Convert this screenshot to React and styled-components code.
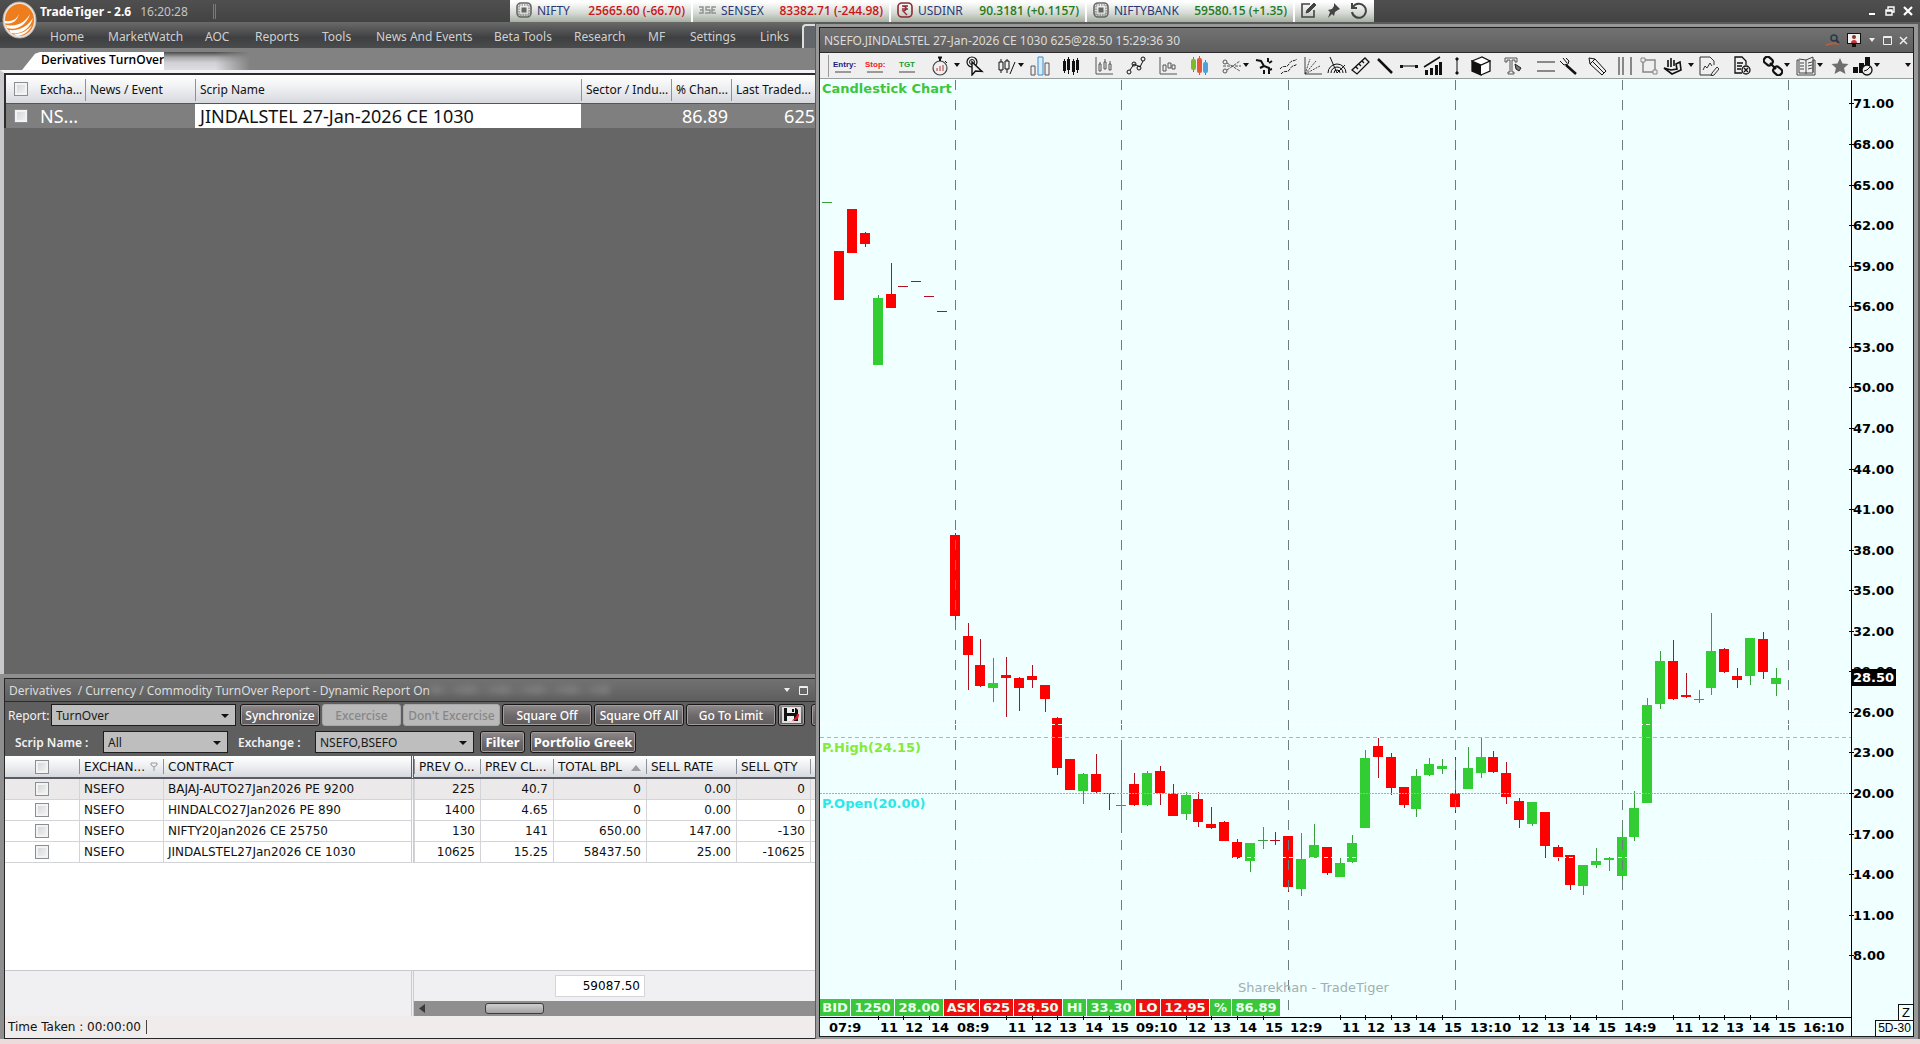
import React from 'react';
import styled, { createGlobalStyle, css } from 'styled-components';

const GlobalStyle = createGlobalStyle`
  * {
    box-sizing: border-box;
  }

  body {
    margin: 0;
    background: #ecdcdc;
    font-family: 'Noto Sans', 'Open Sans', sans-serif;
    font-size: 12px;
    color: #111;
  }

  button, input, select {
    font-family: inherit;
  }
`;

const Page = styled.div`
  display: flex;
  flex-direction: column;
  height: 100vh;
  min-height: 700px;
  padding-bottom: 5px;
  overflow: hidden;
`;

/* ---------- title bar ---------- */

const TitleBar = styled.header`
  position: relative;
  display: flex;
  flex: none;
  height: 22px;
  background: linear-gradient(#4f4f4f, #434343);
`;

const Logo = styled.svg`
  position: absolute;
  left: 2px;
  top: 1px;
  z-index: 2;
`;

const Brand = styled.div`
  display: flex;
  flex: 1 1 510px;
  align-items: center;
  gap: 9px;
  padding-left: 40px;
  color: #c4c4c4;
  white-space: nowrap;

  strong {
    color: #fff;
  }
`;

const BrandRule = styled.span`
  width: 3px;
  height: 15px;
  margin-left: 16px;
  border: solid #7b7b7b;
  border-width: 0 1px;
`;

const Ticker = styled.div`
  display: flex;
  flex: none;
`;

const TickerCell = styled.div`
  display: flex;
  align-items: center;
  gap: 5px;
  width: ${(p) => p.$width}px;
  padding: 0 6px 2px;
  border-right: 2px solid #fff;
  background: linear-gradient(#fdfefd 10%, #d5dad4 60%, #a5b0a1);
  color: #2b3876;
  white-space: nowrap;
`;

const TickerValue = styled.span`
  margin-left: auto;
  font-family: 'Open Sans', sans-serif;
  font-weight: 600;
  color: ${(p) => (p.$up ? '#267a1f' : '#c9161b')};
`;

const IconButton = styled.button`
  display: flex;
  padding: 0;
  border: 0;
  background: none;
  color: inherit;
`;

const TickerTools = styled(TickerCell)`
  gap: 8px;
  padding-left: 5px;
  border-right: 0;
  color: #444;
`;

const WindowControls = styled.div`
  display: flex;
  flex: 1 1 546px;
  align-items: center;
  justify-content: flex-end;
  gap: 8px;
  padding-right: 7px;
  color: #fff;
`;

/* ---------- workspace ---------- */

const Workspace = styled.main`
  display: grid;
  flex: 1;
  grid-template-columns: 815fr 1105fr;
  min-height: 0;
`;

const LeftSide = styled.div`
  display: flex;
  flex-direction: column;
  min-width: 0;
  overflow: hidden;
  background: #828282;
`;

const Menu = styled.nav`
  display: flex;
  flex: none;
  height: 26px;
  padding-left: 50px;
  background: linear-gradient(#6a6a6a, #3f4042 60%, #4a4b4d);
`;

const MenuLink = styled.a`
  flex: none;
  width: ${(p) => p.$width}px;
  line-height: 30px;
  color: #d0d0d0;
  text-decoration: none;
  white-space: nowrap;
`;

const MenuStub = styled.span`
  flex: 1;
  margin-top: 2px;
  border: solid #ddd;
  border-width: 2px 0 0 2px;
  border-radius: 4px 0 0 0;
  background: #63676b;
`;

const TabStrip = styled.div`
  display: flex;
  flex: none;
  height: 22px;
  padding: 4px 0 0 22px;
`;

const Tab = styled.button`
  flex: none;
  min-width: 135px;
  padding: 0 0 2px 19px;
  border: 0;
  background: #fff;
  clip-path: polygon(0 100%, 13px 10%, 18px 0, 100% 0, 100% 100%);
  font-family: 'Open Sans', sans-serif;
  font-size: 12px;
  font-weight: 600;
  line-height: 16px;
  color: #000;
  text-align: left;
  white-space: nowrap;
`;

const TabSmear = styled.span`
  width: 86px;
  background: linear-gradient(90deg, transparent 60%, #828282), linear-gradient(#4a4a4a, #a9a9ac 30%, #d2d2d6 60%, #dedee2);
`;

const WatchFrame = styled.section`
  flex: 1;
  min-height: 0;
  border-top: 3px solid #f4f4f6;
  border-left: 4px solid #c9c9cb;
  background: #666;
  overflow: hidden;
`;

const WatchTable = styled.table`
  width: 100%;
  border-top: 2px solid #2b2b30;
  border-left: 2px solid #2b2b30;
  border-collapse: separate;
  border-spacing: 0;
  table-layout: fixed;
  white-space: nowrap;

  th {
    height: 29px;
    padding: 0 0 0 5px;
    border-bottom: 1px solid #55555c;
    background: linear-gradient(90deg, #8c929a, #8c929a) 0 60% / 1px 22px no-repeat,
      linear-gradient(#fff, #f1f2f4 40%, #d6d9de);
    font-weight: 400;
    text-align: left;
    overflow: hidden;
  }

  th:first-child,
  th:nth-child(2) {
    background: linear-gradient(#fff, #f1f2f4 40%, #d6d9de);
  }

  td {
    height: 24px;
    padding: 0 0 0 5px;
    background: #7f7f7f;
    color: #fff;
    font-size: 18px;
    line-height: 22px;
  }

  th:first-child,
  td:first-child {
    padding: 0 0 0 8px;
  }
`;

const ScripCell = styled.td`
  && {
    background: #fff;
    color: #111;
  }
`;

const NumberCell = styled.td`
  && {
    padding: 0 ${(p) => p.$pad}px 0 0;
    text-align: right;
  }
`;

const Check = styled.input.attrs({ type: 'checkbox' })`
  display: block;
  appearance: none;
  width: 14px;
  height: 14px;
  margin: 0 ${(p) => (p.$center ? 'auto' : '0')};
  border: 1px solid #8b8f94;
  background: linear-gradient(135deg, #cfd2d6, #f7f7f7);
  box-shadow: inset 0 0 0 2px #f3f3f3;
`;

/* ---------- report window ---------- */

const ReportWindow = styled.section`
  flex: none;
  padding: 4px 0 0 4px;
  background: #8f8f8f;
`;

const ReportBody = styled.div`
  border: solid #262629;
  border-width: 1px 0 1px 1px;
  background: #5f5f5f;
`;

const PanelTitle = styled.div`
  display: flex;
  align-items: center;
  height: ${(p) => p.$height}px;
  padding: 0 ${(p) => p.$right}px 0 4px;
  border-bottom: 1px solid #2c2c2e;
  background: linear-gradient(#727272, #5e5e5e);
  color: #dcdcdc;
  white-space: nowrap;
`;

const TitleSmear = styled.span`
  width: 180px;
  height: 8px;
  background: repeating-linear-gradient(90deg, #8d8d8d 0 9px, #737373 15px 22px, #858585 28px 34px);
  opacity: 0.6;
  filter: blur(3px);
`;

const PanelControls = styled.div`
  display: flex;
  align-items: center;
  gap: ${(p) => p.$gap}px;
  margin-left: auto;
`;

const Toolbar = styled.div`
  display: flex;
  align-items: center;
  gap: 2px;
  height: ${(p) => p.$height}px;
  padding-left: ${(p) => p.$left}px;
  padding-bottom: 1px;
  overflow: hidden;
`;

const FieldLabel = styled.label`
  flex: none;
  width: ${(p) => p.$width}px;
  color: #f2f2f2;
  font-weight: ${(p) => (p.$strong ? 600 : 400)};
  white-space: nowrap;
`;

const SelectBox = styled.span`
  position: relative;
  flex: none;
  width: ${(p) => p.$width}px;
  margin-right: ${(p) => p.$after}px;

  &::after {
    content: '';
    position: absolute;
    right: 7px;
    top: 10px;
    border: solid transparent;
    border-width: 4px 4px 0;
    border-top-color: #111;
  }
`;

const Select = styled.select`
  appearance: none;
  display: block;
  width: 100%;
  height: 22px;
  padding: 0 4px;
  border: 1px solid #1d1d1d;
  border-radius: 0;
  background: #bebebe;
  color: #1a1a1a;
  font-size: 12px;
`;

const Action = styled.button`
  display: flex;
  flex: none;
  align-items: center;
  justify-content: center;
  width: ${(p) => p.$width}px;
  height: 22px;
  margin-right: ${(p) => p.$after || 0}px;
  padding: 0;
  border: 1px solid #161616;
  border-radius: 3px;
  background: linear-gradient(#8f898a, #6f6b6c 50%, #5f5b5c);
  box-shadow: inset 0 0 0 1px #a39d9e;
  color: #fff;
  font-size: ${(p) => (p.$bold ? 13 : 12)}px;
  font-weight: ${(p) => (p.$bold ? 700 : 500)};
  white-space: nowrap;

  ${(p) =>
    p.disabled &&
    css`
      border-color: #a8a8a8;
      background: #b9b9b9;
      box-shadow: none;
      color: #878787;
    `}
`;

const Sheet = styled.div`
  min-height: 214px;
  background: #fff;
  overflow: hidden;
`;

const ReportTable = styled.table`
  width: 100%;
  border-collapse: separate;
  border-spacing: 0;
  table-layout: fixed;
  font-family: 'DejaVu Sans', Verdana, sans-serif;
  white-space: nowrap;

  th {
    height: 23px;
    padding: 0 5px;
    border-bottom: 2px solid #5c5c66;
    background: linear-gradient(90deg, #8c929a, #8c929a) 0 3px / 1px 15px no-repeat,
      linear-gradient(#fff, #f1f2f4 40%, #d6d9de);
    font-size: 12px;
    font-weight: 400;
    text-align: left;
    overflow: hidden;
  }

  td {
    height: 21px;
    padding: 0 5px;
    border: solid #d2d4d8;
    border-width: 0 0 1px 1px;
    font-size: 12px;
    line-height: 18px;
  }

  th:first-child {
    background: linear-gradient(#fff, #f1f2f4 40%, #d6d9de);
  }

  td:first-child {
    border-left: 0;
  }

  th:nth-child(3) {
    border-right: 3px double #5c5c66;
  }

  td:nth-child(3) {
    border-right: 3px double #c9ccd2;
  }

  td:nth-child(2),
  td:nth-child(3) {
    padding-left: 4px;
  }

  tbody tr:first-child {
    background: #ece9ea;
  }

  td:nth-child(n + 4) {
    text-align: right;
  }
`;

const HeadIcon = styled.svg`
  float: right;
  margin: ${(p) => p.$top}px 0 0;
`;

const Totals = styled.div`
  display: flex;
  height: 31px;
  border-top: 1px solid #c6c9ce;
  background: #f0f0f2;
`;

const TotalsPane = styled.div`
  flex: none;
  width: ${(p) => p.$width}px;
  border-right: ${(p) => (p.$split ? '3px double #c9ccd2' : '0')};
`;

const TotalInput = styled.input`
  width: 90px;
  height: 22px;
  margin: 4px 0 0 2px;
  padding: 0 4px;
  border: 1px solid #d4d6da;
  background: #fff;
  font-family: 'DejaVu Sans', Verdana, sans-serif;
  font-size: 12px;
  text-align: right;
`;

const ScrollRow = styled.div`
  display: flex;
  height: 15px;
  background: #f0f0f2;
`;

const ScrollTrack = styled.div`
  display: flex;
  flex: 1;
  align-items: center;
  gap: 60px;
  padding-left: 5px;
  background: #8f8f8f;
`;

const ScrollThumb = styled.span`
  width: 59px;
  height: 11px;
  border: 1px solid #3d3d3d;
  border-radius: 3px;
  background: linear-gradient(#cfcfcf, #a2a2a2);
`;

const StatusBar = styled.div`
  display: flex;
  align-items: center;
  height: 22px;
  padding-left: 3px;
  background: #efeceb;
  font-family: 'DejaVu Sans', Verdana, sans-serif;

  span {
    padding-right: 5px;
    border-right: 1px solid #444;
  }
`;

/* ---------- chart window ---------- */

const ChartFrame = styled.section`
  display: flex;
  flex-direction: column;
  min-width: 0;
  min-height: 0;
  border: solid #5a5a5a;
  border-width: 2px 2px 0 1px;
`;

const ChartBezel = styled.div`
  display: flex;
  flex: 1;
  min-height: 0;
  padding: 3px 4px 2px 3px;
  background: #989898;
`;

const ChartWindow = styled.div`
  display: flex;
  flex: 1;
  flex-direction: column;
  min-width: 0;
  border: 1px solid #1f1f1f;
  background: #f0ffff;
`;

const ChartTools = styled.div`
  display: flex;
  flex: none;
  align-items: center;
  height: 26px;
  padding: 0 1px 0 6px;
  border-bottom: 1px solid #9aa0a0;
  background: #efefef;
  overflow: hidden;

  &::before {
    content: '';
    width: 2px;
    height: 22px;
    border-right: 1px solid #999;
  }
`;

const ToolButton = styled(IconButton)`
  flex: none;
  margin-left: ${(p) => (p.$last ? 'auto' : `${p.$before}px`)};
  color: #111;
`;

const Word = styled.span`
  width: 20px;
  padding-bottom: 2px;
  background: linear-gradient(#999, #999) center bottom / 16px 2px no-repeat;
  color: ${(p) => p.$color};
  font-family: 'Liberation Sans', sans-serif;
  font-size: 8px;
  font-weight: 700;
  line-height: 12px;
  text-align: center;
`;

const ChartArea = styled.div`
  position: relative;
  flex: 1;
  min-height: 0;
`;

const Plot = styled.svg`
  display: block;
  width: 100%;
  height: 100%;
  font-family: 'DejaVu Sans', Verdana, sans-serif;
  font-size: 13px;
`;

const QuoteStrip = styled.div`
  position: absolute;
  left: 0;
  bottom: 20px;
  display: flex;
  gap: 1px;
`;

const Quote = styled.span`
  width: ${(p) => p.$width}px;
  height: 17px;
  background: ${(p) => (p.$down ? '#ee1010' : '#3cc63c')};
  color: #eafff0;
  font-family: 'DejaVu Sans', Verdana, sans-serif;
  font-size: 13px;
  font-weight: 700;
  line-height: 17px;
  text-align: center;
`;

const CornerBox = styled.button`
  position: absolute;
  right: -1px;
  bottom: ${(p) => p.$bottom}px;
  width: ${(p) => p.$width}px;
  height: 17px;
  padding: 0;
  border: 1px solid #111;
  background: #f0ffff;
  font-family: 'Liberation Sans', sans-serif;
  font-size: ${(p) => p.$size}px;
  line-height: 15px;
  text-align: center;
`;

/* ---------- data ---------- */

const menu = [
  ['Home', 58],
  ['MarketWatch', 97],
  ['AOC', 50],
  ['Reports', 67],
  ['Tools', 54],
  ['News And Events', 118],
  ['Beta Tools', 80],
  ['Research', 74],
  ['MF', 42],
  ['Settings', 70],
  ['Links', 42],
];

const tickers = [
  { name: 'NIFTY', value: '25665.60 (-66.70)', icon: 'chip', width: 183 },
  { name: 'SENSEX', value: '83382.71 (-244.98)', icon: 'bse', width: 198 },
  { name: 'USDINR', value: '90.3181 (+0.1157)', icon: 'rupee', up: true, width: 196 },
  { name: 'NIFTYBANK', value: '59580.15 (+1.35)', icon: 'chip', up: true, width: 208 },
];

const contracts = [
  ['BAJAJ-AUTO27Jan2026 PE 9200', '225', '40.7', '0', '0.00', '0'],
  ['HINDALCO27Jan2026 PE 890', '1400', '4.65', '0', '0.00', '0'],
  ['NIFTY20Jan2026 CE 25750', '130', '141', '650.00', '147.00', '-130'],
  ['JINDALSTEL27Jan2026 CE 1030', '10625', '15.25', '58437.50', '25.00', '-10625'],
];

const quotes = [
  ['BID', 30],
  ['1250', 43],
  ['28.00', 48],
  ['ASK', 35, true],
  ['625', 33, true],
  ['28.50', 48, true],
  ['HI', 23],
  ['33.30', 48],
  ['LO', 24, true],
  ['12.95', 48, true],
  ['%', 21],
  ['86.89', 48],
];

// direction, high, body top, body bottom, low
const candles = [
  ['g', 123, 123, 124, 124], ['r', 172, 172, 221, 221], ['r', 130, 130, 174, 174],
  ['r', 153, 154, 165, 168], ['g', 216, 219, 286, 286], ['r', 184, 215, 229, 229],
  ['r', 207, 207, 208, 208], ['r', 202, 202, 203, 203], ['r', 217, 217, 218, 218],
  ['r', 232, 232, 233, 233], ['r', 454, 456, 537, 547], ['r', 544, 557, 576, 611],
  ['r', 560, 586, 607, 608], ['g', 579, 604, 609, 623], ['r', 578, 596, 599, 638],
  ['r', 598, 599, 609, 632], ['r', 586, 597, 601, 609], ['r', 606, 606, 620, 633],
  ['r', 638, 639, 689, 696], ['r', 680, 680, 711, 711], ['g', 694, 695, 712, 725],
  ['r', 675, 695, 713, 714], ['r', 714, 714, 715, 731], ['g', 667, 726, 727, 754],
  ['r', 694, 705, 726, 727], ['g', 692, 694, 726, 727], ['r', 687, 692, 714, 726],
  ['r', 705, 715, 737, 737], ['g', 713, 716, 735, 741], ['r', 713, 720, 743, 748],
  ['r', 728, 745, 749, 750], ['r', 742, 743, 762, 762], ['r', 760, 763, 779, 780],
  ['g', 764, 764, 782, 793], ['g', 748, 761, 762, 770], ['r', 753, 761, 762, 766],
  ['r', 757, 757, 808, 813], ['g', 754, 780, 810, 817], ['g', 745, 766, 779, 779],
  ['r', 768, 768, 794, 796], ['g', 779, 784, 798, 798], ['g', 756, 764, 783, 784],
  ['g', 671, 679, 749, 749], ['r', 659, 667, 678, 699], ['r', 674, 678, 709, 716],
  ['r', 708, 708, 726, 729], ['g', 690, 697, 730, 738], ['g', 679, 685, 696, 697],
  ['g', 680, 687, 690, 695], ['r', 678, 714, 728, 734], ['g', 668, 689, 710, 710],
  ['g', 659, 678, 694, 699], ['r', 672, 678, 693, 694], ['r', 683, 694, 718, 725],
  ['r', 719, 722, 741, 749], ['g', 723, 723, 745, 747], ['r', 733, 733, 767, 779],
  ['r', 766, 768, 778, 782], ['r', 776, 776, 806, 811], ['g', 786, 786, 807, 816],
  ['g', 769, 782, 786, 789], ['g', 778, 779, 781, 792], ['g', 741, 758, 797, 810],
  ['g', 712, 729, 758, 762], ['g', 619, 626, 724, 724], ['g', 572, 582, 625, 630],
  ['r', 561, 582, 620, 621], ['r', 594, 616, 618, 619], ['g', 611, 620, 621, 624],
  ['g', 534, 572, 609, 616], ['r', 569, 570, 593, 594], ['r', 589, 597, 601, 609],
  ['g', 559, 559, 597, 606], ['r', 553, 560, 593, 600], ['g', 589, 599, 605, 617],
];

const SESSION = 13;
const slotX = (i) => Math.floor(7 + i * 12.825);
const priceY = (price) => Math.round(714 - (price - 20) * 13.52);

const prices = Array.from({ length: 22 }, (_, i) => 71 - i * 3);
const dividers = Array.from({ length: 6 }, (_, i) => slotX(10 + i * SESSION));

// slot of the candle under which each time label starts
const times = [
  [0, '07:9'], [4, '11'], [6, '12'], [8, '14'],
  [10, '08:9'], [14, '11'], [16, '12'], [18, '13'], [20, '14'], [22, '15'],
  [24, '09:10'], [28, '12'], [30, '13'], [32, '14'], [34, '15'],
  [36, '12:9'], [40, '11'], [42, '12'], [44, '13'], [46, '14'], [48, '15'],
  [50, '13:10'], [54, '12'], [56, '13'], [58, '14'], [60, '15'],
  [62, '14:9'], [66, '11'], [68, '12'], [70, '13'], [72, '14'], [74, '15'],
  [76, '16:10'],
];

/* ---------- icons ---------- */

const line = { fill: 'none', stroke: 'currentColor' };

const glyphs = {
  watch: (
    <g {...line}>
      <circle cx="10" cy="12" r="7" strokeWidth="1.200" stroke="#444" />
      <path d="M8 1.500h4M10 2v3" strokeWidth="2" />
      <path d="M15 5l2 2" />
      <path d="M7 15v-3M10 15v-5M13 15V9" stroke="#b33" />
    </g>
  ),
  pointer: (
    <g {...line}>
      <circle cx="7" cy="6" r="5" strokeWidth="1.2" />
      <circle cx="7" cy="6" r="2.5" />
      <path d="M7 6v13l3.500-4 6.500.500z" fill="#efefef" strokeWidth="1.400" />
    </g>
  ),
  candlePen: (
    <g {...line}>
      <path d="M4 3v14M10 3v14M13 18l5-12" />
      <path d="M2 6h4v8H2zM8 5h4v8H8z" fill="#efefef" />
    </g>
  ),
  bars: (
    <g {...line} stroke="#555">
      <path d="M1 10h4v9H1zM15 7h4v12h-4z" />
      <path d="M8 1h5v18H8z" stroke="#3d8fcf" fill="#d7ebf9" />
    </g>
  ),
  blackCandles: (
    <g>
      <path d="M2 5h3v10H2zM6 3h3v11H6zM11 5h3v11h-3zM15 4h3v10h-3z" />
      <path d="M3.500 3v14M7.500 1v17M12.500 3v16M16.500 2v15" stroke="currentColor" />
    </g>
  ),
  candleAxis: (
    <g {...line} stroke="#555">
      <path d="M2 1v17h17" />
      <path d="M5 8h2v7H5zM10 6h2v7h-2zM15 8h2v6h-2zM6 6v2M11 3v3M16 5v3" />
    </g>
  ),
  nodes: (
    <g {...line}>
      <path d="M4 14l4-6 6 3 3-6" />
      <circle cx="3" cy="16" r="2" />
      <circle cx="8" cy="8" r="2" />
      <circle cx="13" cy="12" r="2" />
      <circle cx="17" cy="3" r="2" />
    </g>
  ),
  boxAxis: (
    <g {...line} stroke="#555">
      <path d="M2 1v17h17" />
      <path d="M5 9h3v6H5zM10 7h3v5h-3zM14 9h3v4h-3z" />
    </g>
  ),
  colorCandles: (
    <g>
      <path d="M3.500 1v15M9.500 0v19M15.500 4v15" stroke="#777" />
      <rect x="1" y="3" width="5" height="11" rx="2" fill="#7db928" />
      <rect x="7" y="2" width="5" height="15" rx="2" fill="#e8543c" />
      <rect x="13" y="6" width="5" height="11" rx="2" fill="#4aa3dd" />
    </g>
  ),
  scissors: (
    <g {...line} stroke="#555">
      <path d="M5 7l13 8M5 14L18 5M1 10h18" strokeDasharray="3 1" />
      <circle cx="3" cy="6" r="2" />
      <circle cx="3" cy="15" r="2" />
    </g>
  ),
  trend: (
    <g {...line} strokeWidth="2">
      <path d="M2 4l5 1 3 5 5 2v6M10 10l-4 2M14 2v4M18 5l-3 2M18 13l-3 1M10 14v4" />
    </g>
  ),
  waves: (
    <g {...line}>
      <path d="M1 13c4-5 6 0 9-5s5-2 8-5M2 18c4-5 6 0 9-5s4-2 7-5" strokeDasharray="3 1" />
    </g>
  ),
  fan: (
    <g {...line} stroke="#444">
      <path d="M2 1v17h17" />
      <path d="M2 18L7 3M2 18L13 5M2 18l15-8" strokeDasharray="2 1" />
    </g>
  ),
  radar: (
    <g {...line}>
      <path d="M1 17a9 9 0 0118 0M4 17a6 6 0 0112 0M7 17a3 3 0 016 0M10 17L3 1M10 17l8-8" />
    </g>
  ),
  ruler: (
    <g {...line} strokeWidth="1.300">
      <path d="M1 14L14 2l4 4L6 18zM5 11l2 2M8 8l2 2M11 5l2 2" />
    </g>
  ),
  diagonal: <path d="M3 3l14 14" {...line} strokeWidth="2.500" />,
  horizontal: (
    <g>
      <path d="M2 10h16" stroke="currentColor" />
      <path d="M1 9h3v3H1zM16 9h3v3h-3z" />
    </g>
  ),
  growth: (
    <g>
      <path d="M2 14h3v5H2zM7 12h3v7H7zM12 9h3v10h-3zM16 6h3v13h-3z" />
      <path d="M1 11L17 1" stroke="currentColor" strokeWidth="1.500" />
    </g>
  ),
  vertical: <path d="M10 3v14M9 2h2v2H9zM9 16h2v2H9z" stroke="currentColor" />,
  cube: (
    <g {...line} strokeWidth="1.300">
      <path d="M1 5l9 4v10l-9-4z" fill="currentColor" />
      <path d="M1 5l10-4 8 4-9 4zM10 9l9-4v10l-9 4" fill="#fff" />
    </g>
  ),
  text: (
    <g {...line} stroke="#555">
      <path d="M2 2h12v4h-2V4H9v12h2v2H5v-2h2V4H4v2H2z" />
      <path d="M12 8l6 4-2 3-3-2z" fill="#777" stroke="#222" />
    </g>
  ),
  rules: <path d="M1 6h18M1 15h18" {...line} stroke="#8a8a8a" strokeWidth="2" />,
  fork: (
    <g {...line}>
      <path d="M8 9l10 9" strokeWidth="2.500" />
      <path d="M2 5l4 4 4-1 1-3-3-3M5 2l4 5" />
    </g>
  ),
  pencil: (
    <g {...line}>
      <path d="M2 2l6 1 11 12-4 4L3 8zM8 3L3 8M6 6l11 11" />
    </g>
  ),
  columns: <path d="M4 1v18M8 1v18M16 1v18" {...line} stroke="#888" strokeWidth="2" />,
  frame: (
    <g {...line} stroke="#888">
      <path d="M4 4h12v12H4z" strokeWidth="1.500" />
      <path d="M2 2h4v4H2zM14 14h4v4h-4z" fill="#efefef" />
    </g>
  ),
  hand: (
    <g {...line} strokeWidth="1.600">
      <path d="M1 12l8 6 9-4-1-8-4 2 1 5-6 1zM5 4v7M8 2v9M11 4v6" />
    </g>
  ),
  docChart: (
    <g {...line} stroke="#333">
      <path d="M15 9V5l-4-4H1v18h11" />
      <path d="M4 14l2-4 2 2 3-5 2 3" />
      <path d="M13 17l5-6 2 2-5 6-3 1z" />
    </g>
  ),
  docClose: (
    <g {...line} strokeWidth="1.300">
      <path d="M14 9V5l-4-4H3v16h7M5 7h6M5 10h5M5 13h4" />
      <circle cx="14" cy="14" r="4" />
      <path d="M12 12l4 4M16 12l-4 4" />
    </g>
  ),
  chain: (
    <g {...line} strokeWidth="2.200">
      <rect x="1" y="2" width="9" height="7" rx="3" transform="rotate(40 6 5)" />
      <rect x="10" y="11" width="9" height="7" rx="3" transform="rotate(40 14 15)" />
      <path d="M7 7l6 6" />
    </g>
  ),
  book: (
    <g {...line} stroke="#444">
      <path d="M1 4h2v13h14V4h2v15H1zM10 4v14M3 3l7 1 7-3v15M4 7h4M4 10h4M4 13h4M12 7l4-1M12 10l4-1M12 13l4-1" />
    </g>
  ),
  star: <path d="M10 2l2.500 5.500 6 .5-4.500 4 1.500 6-5.500-3-5.500 3 1.500-6-4.500-4 6-.5z" fill="#6e6e6e" />,
  barClock: (
    <g>
      <path d="M0 11h5v6H0zM6 7h5v10H6zM12 1h5v10h-5z" />
      <circle cx="14" cy="14" r="5" fill="#efefef" stroke="currentColor" strokeWidth="1.300" />
      <path d="M14 14l3-3M14 14l-3 1" stroke="currentColor" />
    </g>
  ),
};

// name, space before it
const tools = [
  ['watch', 13], ['caret', 3], ['pointer', 4], ['candlePen', 12], ['caret', 0], ['bars', 5],
  ['blackCandles', 11], ['candleAxis', 13], ['nodes', 12], ['boxAxis', 12], ['colorCandles', 12],
  ['scissors', 12], ['caret', 0], ['trend', 4], ['waves', 5], ['fan', 4], ['radar', 4],
  ['ruler', 4], ['diagonal', 4], ['horizontal', 4], ['growth', 4], ['vertical', 4], ['cube', 4],
  ['text', 12], ['rules', 13], ['fork', 2], ['pencil', 9], ['columns', 8], ['frame', 4],
  ['hand', 4], ['caret', 4], ['docChart', 4], ['docClose', 13], ['chain', 11], ['caret', 0],
  ['book', 5], ['caret', 0], ['star', 6], ['barClock', 3], ['caret', 0],
];

function Caret({ color = '#111' }) {
  return (
    <svg width="8" height="5" viewBox="0 0 8 5" aria-hidden="true">
      <path d="M1 0h6L4 4z" fill={color} />
    </svg>
  );
}

function ToolGlyph({ name }) {
  if (name === 'caret') return <Caret />;
  return (
    <svg width="20" height="20" viewBox="0 0 20 20" fill="currentColor" aria-hidden="true">
      {glyphs[name]}
    </svg>
  );
}

function TickerIcon({ kind }) {
  if (kind === 'bse') {
    return (
      <svg width="17" height="8" viewBox="0 0 17 8" fill="none" stroke="#8d9194" strokeWidth="1.400" aria-hidden="true">
        <path d="M0 1h4v6H0M1 4h3M11 1H7v3h4v3H6M17 1h-4v6h4M13 4h3" />
      </svg>
    );
  }
  const color = kind === 'rupee' ? '#8c2a33' : '#666';
  return (
    <svg width="16" height="16" viewBox="0 0 16 16" fill="none" stroke={color} aria-hidden="true">
      <rect x="1" y="1" width="14" height="14" rx="4" strokeWidth="1.600" />
      {kind === 'rupee' ? (
        <path d="M5 4h6M5 7h6M6 4c4 0 4 5 0 5l4 4" strokeWidth="1.300" />
      ) : (
        <>
          <rect x="3" y="3" width="10" height="10" strokeDasharray="1.500 1" />
          <rect x="6" y="6" width="4" height="4" fill={color} />
        </>
      )}
    </svg>
  );
}

function TigerLogo() {
  return (
    <Logo width="35" height="38" viewBox="0 0 35 38" aria-label="TradeTiger">
      <ellipse cx="17.500" cy="19" rx="16.500" ry="18" fill="#e9e4df" stroke="#b5b0ac" />
      <ellipse cx="17.500" cy="19" rx="14.500" ry="16" fill="#ee7d1e" />
      <g fill="#fff">
        <path d="M3 20c9 1 12-3 14-7-2 7-7 11-14 9z" />
        <path d="M4 24c13 2 20-4 24-11-3 10-12 17-23 14z" />
        <path d="M7 29c11 1 19-4 24-12-3 11-12 17-22 15z" />
        <path d="M12 33c8 0 14-4 18-9-3 7-9 11-15 11z" />
      </g>
    </Logo>
  );
}

/* ---------- parts ---------- */

function AppTitle() {
  return (
    <TitleBar>
      <TigerLogo />
      <Brand>
        <strong>TradeTiger - 2.6</strong>
        <span>16:20:28</span>
        <BrandRule />
      </Brand>
      <Ticker>
        {tickers.map((t) => (
          <TickerCell key={t.name} $width={t.width}>
            <TickerIcon kind={t.icon} />
            <span>{t.name}</span>
            <TickerValue $up={t.up}>{t.value}</TickerValue>
          </TickerCell>
        ))}
        <TickerTools $width={79}>
          <IconButton aria-label="Edit">
            <svg width="17" height="17" viewBox="0 0 17 17" fill="none" stroke="currentColor" strokeWidth="1.600">
              <path d="M10 2H2v13h12V8" />
              <path d="M6 11l1-3 7-7 2 2-7 7z" fill="currentColor" strokeWidth="1" />
            </svg>
          </IconButton>
          <IconButton aria-label="Pin">
            <svg width="17" height="17" viewBox="0 0 17 17" fill="currentColor">
              <path d="M9 1l6 6-2 1-3 2-1 4-6-6 4-1 2-3zM5 10l2 2-4 4z" />
            </svg>
          </IconButton>
          <IconButton aria-label="Refresh">
            <svg width="17" height="17" viewBox="0 0 17 17" fill="none" stroke="currentColor" strokeWidth="2">
              <path d="M3 5a7 7 0 11-1 5M2 1v5h5" />
            </svg>
          </IconButton>
        </TickerTools>
      </Ticker>
      <WindowControls>
        <IconButton aria-label="Minimize">
          <svg width="10" height="10" viewBox="0 0 10 10" stroke="currentColor" strokeWidth="2">
            <path d="M2 8h6" />
          </svg>
        </IconButton>
        <IconButton aria-label="Restore">
          <svg width="10" height="10" viewBox="0 0 10 10" fill="none" stroke="currentColor" strokeWidth="1.400">
            <path d="M3 3V1h6v5H7M1 4h6v5H1zM1 5h6" />
          </svg>
        </IconButton>
        <IconButton aria-label="Close">
          <svg width="10" height="10" viewBox="0 0 10 10" stroke="currentColor" strokeWidth="2.200">
            <path d="M1 1l8 8M9 1L1 9" />
          </svg>
        </IconButton>
      </WindowControls>
    </TitleBar>
  );
}

function MarketWatch() {
  return (
    <WatchFrame>
      <WatchTable>
        <colgroup>
          <col width="29" />
          <col width="50" />
          <col width="110" />
          <col width="386" />
          <col width="90" />
          <col width="60" />
          <col />
        </colgroup>
        <thead>
          <tr>
            <th>
              <Check aria-label="Select all scrips" />
            </th>
            <th>Excha...</th>
            <th>News / Event</th>
            <th>Scrip Name</th>
            <th>Sector / Indu...</th>
            <th>% Chan...</th>
            <th>Last Traded...</th>
          </tr>
        </thead>
        <tbody>
          <tr>
            <td>
              <Check aria-label="Select JINDALSTEL" />
            </td>
            <td>NS...</td>
            <td />
            <ScripCell>JINDALSTEL 27-Jan-2026 CE 1030</ScripCell>
            <td />
            <NumberCell $pad={3}>86.89</NumberCell>
            <NumberCell $pad={0}>625</NumberCell>
          </tr>
        </tbody>
      </WatchTable>
    </WatchFrame>
  );
}

function Report() {
  return (
    <ReportWindow>
      <ReportBody>
        <PanelTitle $height={23} $right={7}>
          Derivatives&nbsp; / Currency / Commodity TurnOver Report - Dynamic Report On
          <TitleSmear />
          <PanelControls $gap={8}>
            <Caret color="#eee" />
            <svg width="9" height="9" viewBox="0 0 9 9" fill="none" stroke="#eee" aria-hidden="true">
              <path d="M.5.5h8v8h-8zM0 1.500h9" />
            </svg>
          </PanelControls>
        </PanelTitle>
        <Toolbar $height={27} $left={3}>
          <FieldLabel htmlFor="report" $width={41}>Report:</FieldLabel>
          <SelectBox $width={185} $after={2}>
            <Select id="report">
              <option>TurnOver</option>
            </Select>
          </SelectBox>
          <Action $width={80}>Synchronize</Action>
          <Action $width={79} disabled>Excercise</Action>
          <Action $width={97} disabled>Don't Excercise</Action>
          <Action $width={90}>Square Off</Action>
          <Action $width={90}>Square Off All</Action>
          <Action $width={90}>Go To Limit</Action>
          <Action $width={27} $after={4} aria-label="Save">
            <svg width="19" height="16" viewBox="0 0 19 16" aria-hidden="true">
              <path d="M0 0h19v16H0z" fill="#ddd" />
              <path d="M2 1h12l2 2v11H2z" fill="#111" />
              <path d="M5 1h8v5H5zM5 9h7v5H5z" fill="#eee" />
              <path d="M10 2h2v3h-2z" fill="#111" />
              <path d="M17 7c0 5-2 6-7 7 2-3 4-3 5-7z" fill="#d8202a" />
            </svg>
          </Action>
          <Action $width={27} aria-label="More" />
        </Toolbar>
        <Toolbar $height={27} $left={10}>
          <FieldLabel htmlFor="scrip" $width={86} $strong>Scrip Name :</FieldLabel>
          <SelectBox $width={125} $after={8}>
            <Select id="scrip">
              <option>All</option>
            </Select>
          </SelectBox>
          <FieldLabel htmlFor="exchange" $width={75} $strong>Exchange :</FieldLabel>
          <SelectBox $width={159} $after={4}>
            <Select id="exchange">
              <option>NSEFO,BSEFO</option>
            </Select>
          </SelectBox>
          <Action $width={45} $after={3} $bold>Filter</Action>
          <Action $width={106} $bold>Portfolio Greek</Action>
        </Toolbar>
        <Sheet>
          <ReportTable>
            <colgroup>
              <col width="74" />
              <col width="84" />
              <col width="251" />
              <col width="66" />
              <col width="73" />
              <col width="93" />
              <col width="90" />
              <col width="74" />
              <col />
            </colgroup>
            <thead>
              <tr>
                <th>
                  <Check $center aria-label="Select all contracts" />
                </th>
                <th>
                  EXCHAN...
                  <HeadIcon $top={2} width="8" height="10" viewBox="0 0 8 10" fill="none" stroke="#999">
                    <path d="M1 1h6v2L4 5 1 3zM4 5v4" />
                  </HeadIcon>
                </th>
                <th>CONTRACT</th>
                <th>PREV O...</th>
                <th>PREV CL...</th>
                <th>
                  TOTAL BPL
                  <HeadIcon $top={5} width="10" height="6" viewBox="0 0 10 6">
                    <path d="M0 6l5-6 5 6z" fill="#9b9ba3" />
                  </HeadIcon>
                </th>
                <th>SELL RATE</th>
                <th>SELL QTY</th>
                <th />
              </tr>
            </thead>
            <tbody>
              {contracts.map(([name, ...numbers]) => (
                <tr key={name}>
                  <td>
                    <Check $center aria-label={`Select ${name}`} />
                  </td>
                  <td>NSEFO</td>
                  <td>{name}</td>
                  {numbers.map((n, i) => (
                    <td key={i}>{n}</td>
                  ))}
                  <td />
                </tr>
              ))}
            </tbody>
          </ReportTable>
        </Sheet>
        <Totals>
          <TotalsPane $width={409} $split />
          <TotalsPane $width={139} />
          <TotalInput aria-label="Total BPL" defaultValue="59087.50" />
        </Totals>
        <ScrollRow>
          <TotalsPane $width={409} $split />
          <ScrollTrack>
            <svg width="6" height="9" viewBox="0 0 6 9" aria-hidden="true">
              <path d="M6 0v9L0 4.500z" fill="#3a3a3a" />
            </svg>
            <ScrollThumb />
          </ScrollTrack>
        </ScrollRow>
        <StatusBar>
          <span>Time Taken : 00:00:00</span>
        </StatusBar>
      </ReportBody>
    </ReportWindow>
  );
}

function CandlePlot() {
  return (
    <Plot viewBox="0 0 1093 957" preserveAspectRatio="xMinYMin meet" shapeRendering="crispEdges">
      {candles.map(([side, high, top, bottom, low], i) => {
        const x = slotX(i);
        const thin = bottom - top < 2;
        const wick = side === 'g' ? '#3aa03a' : '#b01020';
        return (
          <g key={i}>
            <rect x={x} y={high} width="1" height={low - high} fill={wick} />
            <rect
              x={x - 5}
              y={top}
              width="10"
              height={bottom - top}
              fill={thin ? wick : side === 'g' ? '#32cd32' : '#ff0000'}
            />
          </g>
        );
      })}
      {dividers.map((x) => (
        <path key={x} d={`M${x + 0.5} 1V932`} stroke="#6d7c7c" strokeDasharray="10 10" />
      ))}
      <path d="M0 645.500H1031M0 778.500H1031" stroke="#fff" strokeDasharray="4 3" />
      <path d="M0 658.500H1031" stroke="#8fdc46" strokeDasharray="4 3" />
      <path d="M0 714.500H1031" stroke="#3fd8e0" strokeDasharray="2 1" />

      <g fontWeight="700">
        <text x="2" y="14" fill="#3cc63c">Candlestick Chart</text>
        <text x="2" y="673" fill="#86ea3a">P.High(24.15)</text>
        <text x="2" y="729" fill="#2fe6e6">P.Open(20.00)</text>
      </g>
      <text x="418" y="913" fill="#9fb0b0">Sharekhan - TradeTiger</text>

      <path d="M1031.500 1V957M0 938.500H1031" stroke="#000" />
      <g fontWeight="700" fill="#000">
        {prices.map((p) => (
          <g key={p}>
            <rect x="1029" y={priceY(p)} width="5" height="1" />
            <text x="1033" y={priceY(p) + 5}>{p.toFixed(2)}</text>
          </g>
        ))}
        {times.map(([slot, label]) => (
          <g key={slot}>
            {!label.includes(':') && <rect x={slotX(slot)} y="936" width="1" height="5" />}
            <text x={slotX(slot) + 2} y="953">{label}</text>
          </g>
        ))}
        <rect x="1031" y="590" width="45" height="17" />
        <text x="1033" y="603" fill="#fff">28.50</text>
      </g>
    </Plot>
  );
}

function Chart() {
  return (
    <ChartFrame>
      <ChartBezel>
        <ChartWindow>
          <PanelTitle $height={25} $right={5}>
            NSEFO.JINDALSTEL 27-Jan-2026 CE 1030 625@28.50 15:29:36 30
            <PanelControls $gap={7}>
              <svg width="15" height="12" viewBox="0 0 15 12" fill="none" aria-hidden="true">
                <path d="M1 11l8-2 5 1" stroke="#b0603c" strokeWidth="2" />
                <circle cx="9" cy="4" r="3" stroke="#26394d" strokeWidth="1.500" />
                <path d="M11 6l3 3" stroke="#26394d" strokeWidth="2" />
              </svg>
              <svg width="14" height="14" viewBox="0 0 14 14" aria-hidden="true">
                <path d="M0 0h14v11H9v3H5v-3H0z" fill="#111" />
                <path d="M1 1h12v9H1z" fill="#f4eeee" />
                <circle cx="7" cy="4" r="2" fill="#833" />
                <path d="M4 10c0-4 6-4 6 0z" fill="#c33" />
              </svg>
              <Caret color="#eee" />
              <svg width="9" height="9" viewBox="0 0 9 9" fill="none" stroke="#eee" aria-hidden="true">
                <path d="M.5.5h8v8h-8zM0 1.500h9" />
              </svg>
              <svg width="9" height="9" viewBox="0 0 9 9" stroke="#eee" strokeWidth="1.500" aria-hidden="true">
                <path d="M1 1l7 7M8 1L1 8" />
              </svg>
            </PanelControls>
          </PanelTitle>
          <ChartTools>
            <ToolButton $before={4}>
              <Word $color="#1c1c80">Entry:</Word>
            </ToolButton>
            <ToolButton $before={12}>
              <Word $color="#e22">Stop:</Word>
            </ToolButton>
            <ToolButton $before={12}>
              <Word $color="#1c9a2a">TGT</Word>
            </ToolButton>
            {tools.map(([name, before], i) => (
              <ToolButton key={i} $before={before} aria-label={name}>
                <ToolGlyph name={name} />
              </ToolButton>
            ))}
            <ToolButton $last aria-label="More tools">
              <Caret />
            </ToolButton>
          </ChartTools>
          <ChartArea>
            <CandlePlot />
            <QuoteStrip>
              {quotes.map(([label, width, down]) => (
                <Quote key={label} $width={width} $down={down}>{label}</Quote>
              ))}
            </QuoteStrip>
            <CornerBox $bottom={15} $width={16} $size={13}>Z</CornerBox>
            <CornerBox $bottom={-1} $width={39} $size={12}>5D-30</CornerBox>
          </ChartArea>
        </ChartWindow>
      </ChartBezel>
    </ChartFrame>
  );
}

function App() {
  return (
    <>
      <GlobalStyle />
      <Page>
        <AppTitle />
        <Workspace>
          <LeftSide>
            <Menu>
              {menu.map(([label, width]) => (
                <MenuLink key={label} href="#" $width={width}>{label}</MenuLink>
              ))}
              <MenuStub />
            </Menu>
            <TabStrip>
              <Tab>Derivatives TurnOver</Tab>
              <TabSmear />
            </TabStrip>
            <MarketWatch />
            <Report />
          </LeftSide>
          <Chart />
        </Workspace>
      </Page>
    </>
  );
}

export default App;
